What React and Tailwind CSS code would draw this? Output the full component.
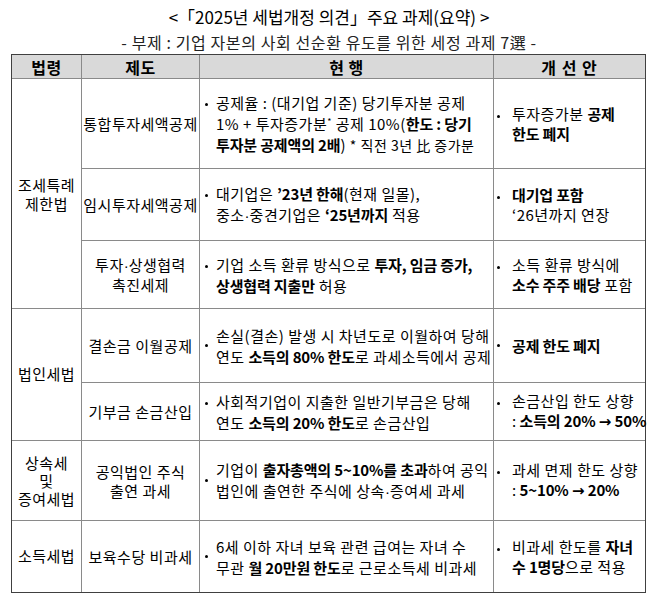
import React from "react";

const F = { fontFamily: '"Noto Sans CJK KR", "Noto Sans", sans-serif' };

function B({ children }) {
  return <b className="font-bold tracking-[-0.15px]">{children}</b>;
}

function Md() {
  return <span style={{ fontFamily: '"Liberation Sans", sans-serif' }} className="tracking-normal">·</span>;
}

function Ar() {
  return <span style={{ fontFamily: '"DejaVu Sans", sans-serif' }} className="tracking-normal">→</span>;
}

function Dot({ mid }) {
  return (
    <span className={`flex shrink-0 ${mid ? "self-center" : "self-start mt-[11px]"}`}>
      <span className="block w-[3px] h-[3px] rounded-full bg-black" />
    </span>
  );
}

function C3({ children, mid }) {
  return (
    <div className="bg-white flex items-center pl-[5px]">
      <div className="flex w-full">
        <Dot mid={mid} />
        <div className="ml-[8px] leading-[21px] whitespace-nowrap">{children}</div>
      </div>
    </div>
  );
}

function C4({ children, mid }) {
  return (
    <div className="bg-white flex items-center pl-[3px]">
      <div className="flex w-full">
        <Dot mid={mid} />
        <div className="ml-[12px] leading-[20px] whitespace-nowrap">{children}</div>
      </div>
    </div>
  );
}

function C2({ children, lh = "leading-[19px]" }) {
  return (
    <div className={`bg-white flex items-center justify-center text-center whitespace-nowrap ${lh}`}>
      <div>{children}</div>
    </div>
  );
}

export default function App() {
  return (
    <div className="w-[658px] h-[605px] bg-white text-black text-[15px] tracking-[0.5px] overflow-hidden" style={F}>
      <div className="pt-[5px] text-center text-[17px] tracking-normal leading-[24px]">
        &lt;「2025년 세법개정 의견」주요 과제(요약) &gt;
      </div>
      <div className="mt-[2px] text-center text-[16px] tracking-[0.6px] leading-[22px] text-[#222]">
        - 부제 : 기업 자본의 사회 선순환 유도를 위한 세정 과제 7選 -
      </div>
      <div className="mt-[1px] ml-[11px] w-[635px] border border-[#404040] bg-[#8a8a8a] grid gap-px grid-cols-[69px_117px_293px_151px] grid-rows-[23px_89px_71px_67px_73px_57px_79px_71px]">
        <div className="bg-[#d9d9d9] flex items-center justify-center font-bold text-[16px]">법령</div>
        <div className="bg-[#d9d9d9] flex items-center justify-center font-bold text-[16px]">제도</div>
        <div className="bg-[#d9d9d9] flex items-center justify-center font-bold text-[16px]">현 행</div>
        <div className="bg-[#d9d9d9] flex items-center justify-center font-bold text-[16px] tracking-[1px]">개 선 안</div>

        <div className="row-span-3 bg-white flex items-center justify-center text-center leading-[19px]">
          <div>조세특례<br />제한법</div>
        </div>
        <C2>통합투자세액공제</C2>
        <C3>
          공제율 : (대기업 기준) 당기투자분 공제<br />
          1% + 투자증가분<sup className="text-[9px]">*</sup> 공제 10%(<B>한도 : 당기</B><br />
          <B>투자분 공제액의 2배</B>) <span className="text-[14px] tracking-[0.5px]">* 직전 3년 比 증가분</span>
        </C3>
        <C4>
          투자증가분 <B>공제</B><br />
          <B>한도 폐지</B>
        </C4>

        <C2>임시투자세액공제</C2>
        <C3>
          대기업은 <B>’23년 한해</B>(현재 일몰),<br />
          중소<Md />중견기업은 <B>‘25년까지</B> 적용
        </C3>
        <C4>
          <B>대기업 포함</B><br />
          ‘26년까지 연장
        </C4>

        <C2>투자<Md />상생협력<br />촉진세제</C2>
        <C3>
          기업 소득 환류 방식으로 <B>투자, 임금 증가,</B><br />
          <B>상생협력 지출만</B> 허용
        </C3>
        <C4>
          소득 환류 방식에<br />
          <B>소수 주주 배당</B> 포함
        </C4>

        <div className="row-span-2 bg-white flex items-center justify-center">법인세법</div>
        <C2>결손금 이월공제</C2>
        <C3 mid>
          손실(결손) 발생 시 차년도로 이월하여 당해<br />
          연도 <B>소득의 80% 한도</B>로 과세소득에서 공제
        </C3>
        <C4 mid>
          <B>공제 한도 폐지</B>
        </C4>

        <C2>기부금 손금산입</C2>
        <C3>
          사회적기업이 지출한 일반기부금은 당해<br />
          연도 <B>소득의 20% 한도</B>로 손금산입
        </C3>
        <C4>
          손금산입 한도 상향<br />
          <span className="tracking-normal">: </span><B>소득의 20% <Ar /> 50%</B>
        </C4>

        <div className="bg-white flex items-center justify-center text-center leading-[18px]">
          <div>상속세<br />및<br />증여세법</div>
        </div>
        <C2>공익법인 주식<br />출연 과세</C2>
        <C3 mid>
          기업이 <B>출자총액의 5~10%를 초과</B>하여 공익<br />
          법인에 출연한 주식에 상속<Md />증여세 과세
        </C3>
        <C4>
          과세 면제 한도 상향<br />
          <span className="tracking-normal">: </span><B>5~10% <Ar /> 20%</B>
        </C4>

        <div className="bg-white flex items-center justify-center">소득세법</div>
        <C2>보육수당 비과세</C2>
        <C3 mid>
          6세 이하 자녀 보육 관련 급여는 자녀 수<br />
          무관 <B>월 20만원 한도</B>로 근로소득세 비과세
        </C3>
        <C4>
          비과세 한도를 <B>자녀</B><br />
          <B>수 1명당</B>으로 적용
        </C4>
      </div>
    </div>
  );
}
